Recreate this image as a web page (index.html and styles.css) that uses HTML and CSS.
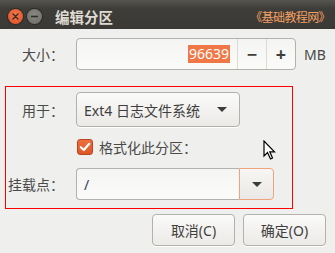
FILE: index.html
```html
<!DOCTYPE html>
<html lang="zh-CN">
<head>
<meta charset="utf-8">
<link rel="stylesheet" href="styles.css">
</head>
<body>
<div class="window">
  <div class="titlebar">
    <span class="wbtn close"><svg width="15" height="15" viewBox="0 0 15 15"><path d="M5 5 L10 10 M10 5 L5 10" stroke="#3a2a22" stroke-width="1.4" stroke-linecap="round"/></svg></span>
    <span class="wbtn min"><svg width="15" height="15" viewBox="0 0 15 15"><path d="M4 7.5 H11" stroke="#2e2e2c" stroke-width="1.6"/></svg></span>
    <span class="title">编辑分区</span>
    <span class="brand">《基础教程网》</span>
  </div>
  <div class="body">
    <div class="row first">
      <span class="lbl">大小<span class="colon">：</span></span>
      <div class="spin">
        <div class="spin-val"><span class="sel">96639</span></div>
        <div class="spin-btn">−</div>
        <div class="spin-btn">+</div>
      </div>
      <span class="unit">MB</span>
    </div>
    <div class="frame">
      <div class="row">
        <span class="lbl">用于<span class="colon">：</span></span>
        <div class="combo">
          <span>Ext4 日志文件系统</span>
          <span class="arrow"></span>
        </div>
      </div>
      <div class="row check-row">
        <span class="lbl"></span>
        <span class="check"><svg width="16" height="16" viewBox="0 0 16 16"><path d="M3.8 8.2 L6.8 11 L12.2 4.8" fill="none" stroke="#fff" stroke-width="2.2" stroke-linecap="round" stroke-linejoin="round"/></svg></span>
        <span class="check-lbl">格式化此分区<span class="colon">：</span></span>
      </div>
      <div class="row">
        <span class="lbl">挂载点<span class="colon">：</span></span>
        <div class="ecombo">
          <div class="ecombo-entry">/</div>
          <div class="ecombo-btn"><span class="arrow"></span></div>
        </div>
      </div>
    </div>
    <div class="actions">
      <button class="btn">取消(C)</button>
      <button class="btn">确定(O)</button>
    </div>
  </div>
  <svg class="cursor" width="14" height="21" viewBox="0 0 14 21"><path d="M1 1 V16 L4.5 12.5 L7.5 19 L9.5 18 L6.8 11.8 L11.5 11.8 Z" fill="#fff" stroke="#000" stroke-width="1.2" stroke-linejoin="miter"/></svg>
</div>
</body>
</html>
```
FILE: styles.css
```css
* { box-sizing: border-box; }
html, body { margin: 0; padding: 0; }
body {
  width: 335px;
  height: 253px;
  overflow: hidden;
  background: #efefed;
  font-family: "Noto Sans", "Noto Sans CJK SC", sans-serif;
  font-size: 14px;
  color: #4a4a48;
}
.window { position: relative; width: 335px; height: 253px; }
.titlebar {
  height: 29px;
  display: flex;
  align-items: center;
  padding: 3px 5px 0 8px;
  background: linear-gradient(#55544f, #3e3d39 30%, #3a3935);
}
.wbtn {
  width: 15px;
  height: 15px;
  border-radius: 50%;
  display: flex;
  margin-right: 4px;
}
.wbtn.close { background: radial-gradient(circle at 50% 40%, #f47a4f, #dd4a1e); box-shadow: 0 0 0 1px #2c2b28; }
.wbtn.min { background: radial-gradient(circle at 50% 40%, #8a8983, #6a6964); box-shadow: 0 0 0 1px #2c2b28; margin-right: 13px; }
.title {
  font-family: "Noto Sans CJK SC", sans-serif;
  font-weight: bold;
  font-size: 14.5px;
  color: #dfdbd2;
  flex: 1;
}
.brand {
  font-family: "Noto Sans CJK SC", sans-serif;
  font-size: 12px;
  letter-spacing: -0.6px;
  color: #f5a062;
}
.body { padding: 9px 9px 0 5px; }
.row { display: flex; align-items: center; }
.row.first { padding-left: 1px; }
.lbl {
  width: 58px;
  margin-right: 12px;
  text-align: right;
  flex: none;
}
.colon { font-family: "Noto Sans CJK TC", sans-serif; }
.spin {
  width: 220px;
  height: 32px;
  display: flex;
  border: 1px solid #b3b1ab;
  border-radius: 4px;
  background: linear-gradient(#f4f4f2, #fbfbfa);
}
.spin-val {
  flex: 1;
  display: flex;
  align-items: center;
  justify-content: flex-end;
  padding-right: 7px;
}
.sel { background: #f07746; color: #fff; line-height: 18px; padding: 0 1px; }
.spin-btn {
  width: 29px;
  border-left: 1px solid #dcdad5;
  display: flex;
  align-items: center;
  justify-content: center;
  font-size: 18px;
  font-weight: bold;
  color: #3e3e3c;
}
.unit { margin-left: 8px; }
.frame {
  margin-top: 16px;
  width: 288px;
  border: 1px solid #ff0000;
  padding: 5px 0 8px 0;
}
.combo {
  width: 164px;
  height: 35px;
  border: 1px solid #b3b1ab;
  border-radius: 4px;
  background: linear-gradient(#fafaf9, #eceae7);
  display: flex;
  align-items: center;
  justify-content: space-between;
  padding: 0 12px 0 7px;
  color: #3e3e3c;
  box-shadow: 0 1px 0 #fff;
}
.arrow {
  width: 0;
  height: 0;
  border-left: 5px solid transparent;
  border-right: 5px solid transparent;
  border-top: 5px solid #3c3c3a;
}
.check-row { margin-top: 12px; height: 16px; }
.check {
  width: 16px;
  height: 16px;
  border-radius: 3px;
  background: linear-gradient(#ee6f3f, #dd5626);
  border: 1px solid #b9461f;
  display: flex;
  align-items: center;
  justify-content: center;
  margin-left: 1px;
}
.check svg { margin: -1px; }
.check-lbl { margin-left: 6px; }
.ecombo {
  width: 198px;
  height: 32px;
  display: flex;
}
.ecombo-entry {
  flex: 1;
  border: 1px solid #b3b1ab;
  border-right: none;
  border-radius: 4px 0 0 4px;
  background: linear-gradient(#f4f4f2, #fbfbfa);
  display: flex;
  align-items: center;
  padding-left: 7px;
  color: #3a3a5a;
}
.ecombo-btn {
  width: 35px;
  border: 1px solid #f0a27e;
  border-radius: 0 4px 4px 0;
  background: linear-gradient(#f7f6f4, #ebe9e6);
  display: flex;
  align-items: center;
  justify-content: center;
}
.frame .row:last-child { margin-top: 13px; }
.actions {
  display: flex;
  justify-content: flex-end;
  gap: 8px;
  margin-top: 5px;
}
.btn {
  width: 83px;
  height: 32px;
  border: 1px solid #b3b1ab;
  border-radius: 4px;
  background: linear-gradient(#fafaf9, #eceae7);
  font-family: "Noto Sans", "Noto Sans CJK SC", sans-serif;
  font-size: 14px;
  color: #3e3e3c;
  padding: 0;
  box-shadow: 0 1px 0 #fff;
}
.cursor { position: absolute; left: 263px; top: 140px; }
```
